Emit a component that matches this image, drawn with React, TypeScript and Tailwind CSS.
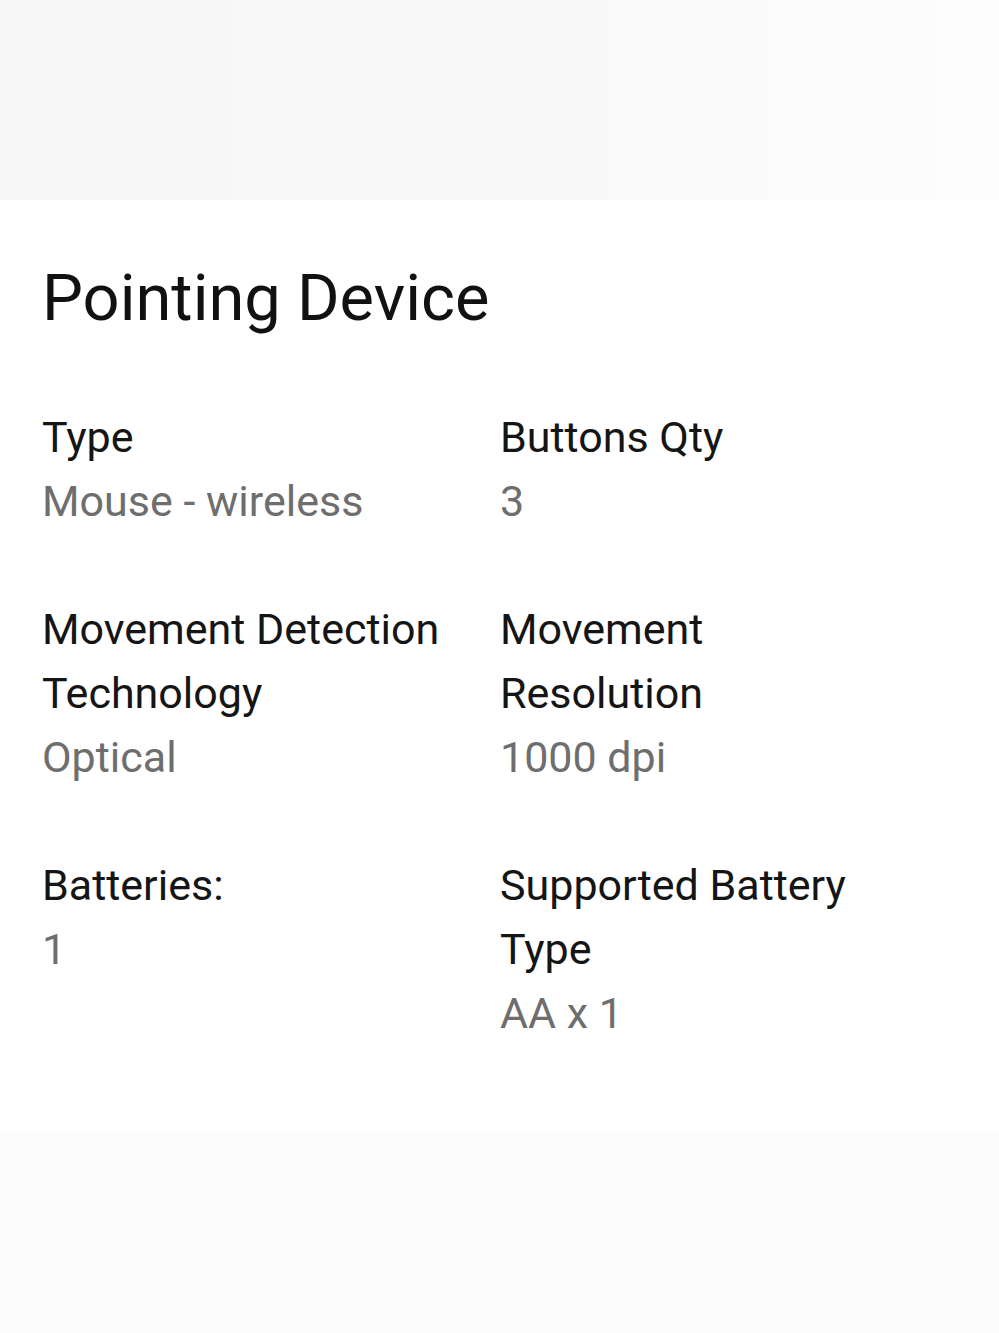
const specs = [
  { label: "Type", value: "Mouse - wireless" },
  { label: "Buttons Qty", value: "3" },
  { label: "Movement Detection Technology", value: "Optical" },
  { label: "Movement Resolution", value: "1000 dpi" },
  { label: "Batteries:", value: "1" },
  { label: "Supported Battery Type", value: "AA x 1" },
];

export default function App() {
  return (
    <div className="min-h-[1333px] bg-[#fcfcfc] font-['Roboto',sans-serif]">
      <div className="h-[200px] bg-gradient-to-r from-[#f7f7f7] via-[#f8f8f8] to-[#fdfdfd]" />
      <section className="bg-white px-[42px] pt-[58px] pb-[86px]">
        <h2 className="text-[65px] leading-[80px] text-[#111111]">Pointing Device</h2>
        <dl className="mt-[67px] grid grid-cols-[406px_400px] gap-x-[52px] gap-y-[64px]">
          {specs.map((s) => (
            <div key={s.label} className="text-[43px] leading-[64px]">
              <dt className="text-[#151515]">{s.label}</dt>
              <dd className="text-[#6e6e6e]">{s.value}</dd>
            </div>
          ))}
        </dl>
      </section>
    </div>
  );
}
